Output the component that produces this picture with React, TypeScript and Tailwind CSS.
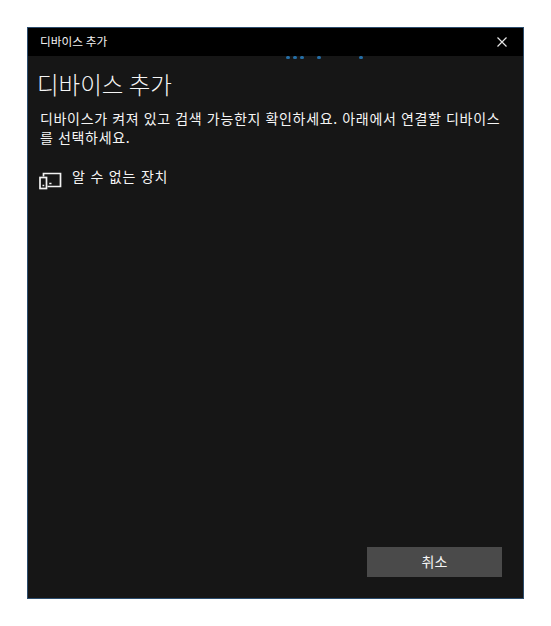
const progressDots = [
  { id: 1, gap: 'ml-[258px]' },
  { id: 2, gap: 'ml-[3px]' },
  { id: 3, gap: 'ml-[3px]' },
  { id: 4, gap: 'ml-[13px]' },
  { id: 5, gap: 'ml-[38px]' },
];

function DeviceIcon() {
  return (
    <svg className="w-[23px] h-[18px] shrink-0" viewBox="0 0 23 18" fill="none" stroke="#f2f2f2" strokeWidth="1.7">
      <path d="M4.5 4.5V1.5H21.5V14.5H8.5" />
      <rect x="1" y="5.5" width="6.5" height="11" />
      <path d="M3.5 13.5H5.25M10.25 11.5H12.5" />
    </svg>
  );
}

function TitleBar() {
  return (
    <div className="h-7 shrink-0 bg-black flex items-center justify-between pl-3 pr-[15px]">
      <span className="pb-0.5 text-[11.7px] leading-none text-[#f0f0f0] whitespace-nowrap">디바이스 추가</span>
      <button aria-label="닫기" className="w-3 h-3">
        <svg className="w-3 h-3" viewBox="0 0 12 12" fill="none" stroke="#e6e6e6" strokeWidth="1.2">
          <path d="M1.5 1.5L10.5 10.5M10.5 1.5L1.5 10.5" />
        </svg>
      </button>
    </div>
  );
}

export default function App() {
  return (
    <div className="w-[551px] h-[626px] bg-white pt-[27px] pl-[27px] overflow-hidden font-['Noto_Sans_CJK_KR',sans-serif]">
      <div className="w-[497px] h-[572px] bg-[#161616] border border-[#2c4d6e] flex flex-col">
        <TitleBar />

        {/* Searching indicator */}
        <div className="h-1 shrink-0 flex">
          {progressDots.map((dot) => (
            <div key={dot.id} className={`w-1 h-[3px] rounded-full bg-[#246ea6] ${dot.gap}`} />
          ))}
        </div>

        <div className="flex-1 flex flex-col pl-[9px]">
          <h1 className="mt-2 text-[23.5px] leading-8 font-light text-[#f5f5f5] whitespace-nowrap">디바이스 추가</h1>
          <p className="mt-[9px] ml-[3px] text-[14px] tracking-[0.68px] [word-spacing:0.6px] leading-[19px] text-[#f5f5f5] whitespace-nowrap">
            디바이스가 켜져 있고 검색 가능한지 확인하세요. 아래에서 연결할 디바이스
            <br />
            를 선택하세요.
          </p>

          <div className="mt-[19px] flex items-start">
            <div className="ml-0.5 pt-1.5">
              <DeviceIcon />
            </div>
            <span className="ml-2.5 text-[14px] tracking-[0.8px] [word-spacing:0.8px] leading-5 text-[#f5f5f5]">알 수 없는 장치</span>
          </div>
        </div>

        <div className="flex justify-end pr-[21px] pb-[21px]">
          <button className="w-[135px] h-[30px] pb-0.5 bg-[#4a4a4a] text-[14px] leading-none text-[#f5f5f5]">취소</button>
        </div>
      </div>
    </div>
  );
}
